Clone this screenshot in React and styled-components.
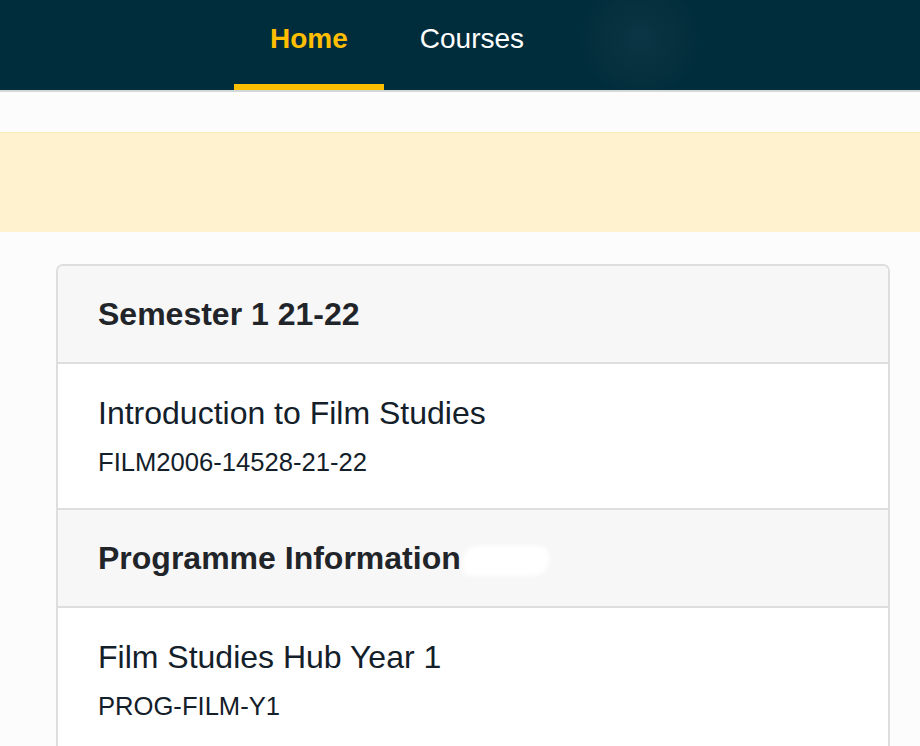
import styled, { createGlobalStyle } from "styled-components";

const GlobalStyle = createGlobalStyle`
	body{
		margin: 0;
		background: #fcfcfc;
		font-family: "Liberation Sans", Arial, sans-serif;
	}
`;

const NavBar = styled.nav`
	height: 90px;
	background: radial-gradient(circle at 640px 38px, #0b3445 0px, #08313f 30px, #002d3c 60px);
	border-bottom: 2px solid #d5d8d9;
	display: flex;
	padding-left: 234px;
`;

const Tab = styled.a`
	display: flex;
	align-items: center;
	box-sizing: border-box;
	height: 90px;
	padding: 0 36px 6px;
	font-size: 28px;
	font-weight: ${props => (props.active ? 700 : 400)};
	color: ${props => (props.active ? "#ffbf00" : "#ffffff")};
	border-bottom: 6px solid ${props => (props.active ? "#ffbf00" : "transparent")};
	text-decoration: none;
`;

const Spacer = styled.div`
	height: 40px;
`;

const Notice = styled.div`
	height: 100px;
	background: #fff2cf;
	border-top: 1px solid #fdecbf;
	box-sizing: border-box;
`;

const Card = styled.section`
	margin: 32px 30px 0 56px;
	border: 2px solid #dedede;
	border-bottom: none;
	border-radius: 7px 7px 0 0;
	overflow: hidden;
	background: #ffffff;
`;

const CardHeader = styled.h2`
	margin: 0;
	padding: 29px 40px;
	background: #f7f7f7;
	border-bottom: 2px solid #dedede;
	border-top: ${props => (props.first ? "none" : "2px solid #dedede")};
	font-size: 32px;
	line-height: 38px;
	font-weight: 700;
	color: #212529;
`;

const Redacted = styled.span`
	display: inline-block;
	width: 86px;
	height: 30px;
	margin-left: 2px;
	vertical-align: middle;
	background: #ffffff;
	border-radius: 14px 10px 16px 8px;
	filter: blur(2px);
`;

const Item = styled.div`
	display: flex;
	flex-direction: column;
	gap: 15px;
	padding: 30px 40px 30px;
	color: #13202a;
`;

const Title = styled.div`
	font-size: 32px;
	line-height: 38px;
`;

const Code = styled.div`
	font-size: 25.6px;
	line-height: 31px;
`;

const App = () => {
	const groups = [
		{ name: "Semester 1 21-22", title: "Introduction to Film Studies", code: "FILM2006-14528-21-22" },
		{ name: "Programme Information", title: "Film Studies Hub Year 1", code: "PROG-FILM-Y1", hidden: true },
	];

	return (
		<>
			<GlobalStyle />
			<NavBar>
				<Tab active>Home</Tab>
				<Tab>Courses</Tab>
			</NavBar>
			<Spacer />
			<Notice />
			<Card>
				{groups.map((g, i) => (
					<div key={g.name}>
						<CardHeader first={i === 0}>
							{g.name}
							{g.hidden && <Redacted />}
						</CardHeader>
						<Item>
							<Title>{g.title}</Title>
							<Code>{g.code}</Code>
						</Item>
					</div>
				))}
			</Card>
		</>
	);
};
export default App;
